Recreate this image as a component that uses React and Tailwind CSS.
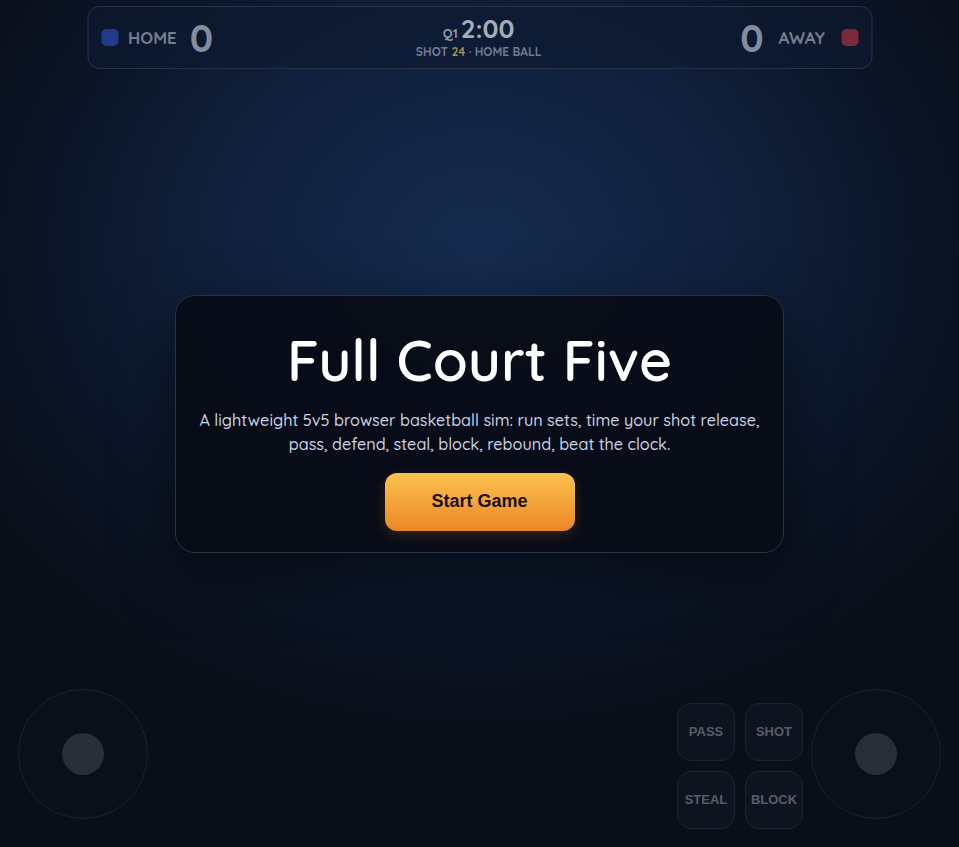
export default function App() {
  const font = { fontFamily: '"Quicksand", "Lato", "Noto Sans", sans-serif' };

  return (
    <div
      className="relative w-full h-[847px] overflow-hidden bg-[radial-gradient(ellipse_62%_58%_at_50%_29%,#162b4f_0%,#10203c_45%,#0b1426_75%,#090e19_100%)] text-white"
      style={font}
    >
      {/* Scoreboard */}
      <div className="absolute left-1/2 top-[6px] -translate-x-1/2 w-[785px] h-[63px] rounded-[12px] border border-[#25324a] bg-[#0e1a30]/70 px-[13px] flex items-center justify-between">
        <div className="flex items-center">
          <div className="w-[17px] h-[17px] rounded-[5px] bg-[#1f3d8a]" />
          <span className="ml-[10px] text-[17px] font-bold text-[#737e92]">HOME</span>
          <span className="ml-[13px] text-[38px] font-bold leading-none text-[#848d9d]">0</span>
        </div>

        <div className="flex flex-col items-center -mt-[2px] ml-[4px]">
          <div className="flex items-baseline gap-[3px] leading-none">
            <span className="text-[13px] font-bold text-[#8d97a8]">Q1</span>
            <span className="text-[26px] font-bold text-[#a3acbb]">2:00</span>
          </div>
          <div className="mt-[4px] text-[12px] font-bold leading-none text-[#6f7d95]">
            SHOT <span className="text-[#a08f57]">24</span> · HOME BALL
          </div>
        </div>

        <div className="flex items-center">
          <span className="text-[38px] font-bold leading-none text-[#848d9d]">0</span>
          <span className="ml-[15px] text-[17px] font-bold text-[#737e92]">AWAY</span>
          <div className="ml-[16px] w-[17px] h-[17px] rounded-[5px] bg-[#7a2a3a]" />
        </div>
      </div>

      {/* Title card */}
      <div className="absolute inset-0 flex items-center justify-center">
        <div className="w-[609px] h-[258px] rounded-[20px] border border-[#2b3240] bg-[#080c16]/95 flex flex-col items-center pt-[30px] shadow-[0_20px_60px_rgba(0,0,0,0.5)]">
          <h1 className="text-[57px] font-semibold leading-[68px] text-white">Full Court Five</h1>
          <p className="mt-[14px] text-[16.2px] font-medium leading-[24px] text-[#c8d0e4] text-center">
            A lightweight 5v5 browser basketball sim: run sets, time your shot release,
            <br />
            pass, defend, steal, block, rebound, beat the clock.
          </p>
          <button
            className="mt-[17px] w-[190px] h-[58px] rounded-[12px] bg-[linear-gradient(180deg,#fcc24f_0%,#f3a13a_55%,#eb8726_100%)] text-[18px] font-bold text-[#1c1208] shadow-[0_4px_12px_rgba(240,150,40,0.18)]"
            style={{ fontFamily: '"Liberation Sans", Arial, sans-serif' }}
          >
            Start Game
          </button>
        </div>
      </div>

      {/* Left joystick */}
      <div className="absolute left-[18px] bottom-[28px] w-[130px] h-[130px] rounded-full border border-[#1c2230] bg-[#0c111c]/40 flex items-center justify-center">
        <div className="w-[42px] h-[42px] rounded-full bg-[#2a2e36]" />
      </div>

      {/* Action buttons */}
      <div
        className="absolute left-[677px] top-[703px] grid grid-cols-2 gap-[10px]"
        style={{ fontFamily: '"Liberation Sans", Arial, sans-serif' }}
      >
        {["PASS", "SHOT", "STEAL", "BLOCK"].map((label) => (
          <div
            key={label}
            className="w-[58px] h-[58px] rounded-[14px] border border-[#1d2330] bg-[#111722]/70 flex items-center justify-center text-[13px] font-bold text-[#565d6b]"
          >
            {label}
          </div>
        ))}
      </div>

      {/* Right joystick */}
      <div className="absolute right-[18px] bottom-[28px] w-[130px] h-[130px] rounded-full border border-[#1c2230] bg-[#0c111c]/40 flex items-center justify-center">
        <div className="w-[42px] h-[42px] rounded-full bg-[#2a2e36]" />
      </div>
    </div>
  );
}
